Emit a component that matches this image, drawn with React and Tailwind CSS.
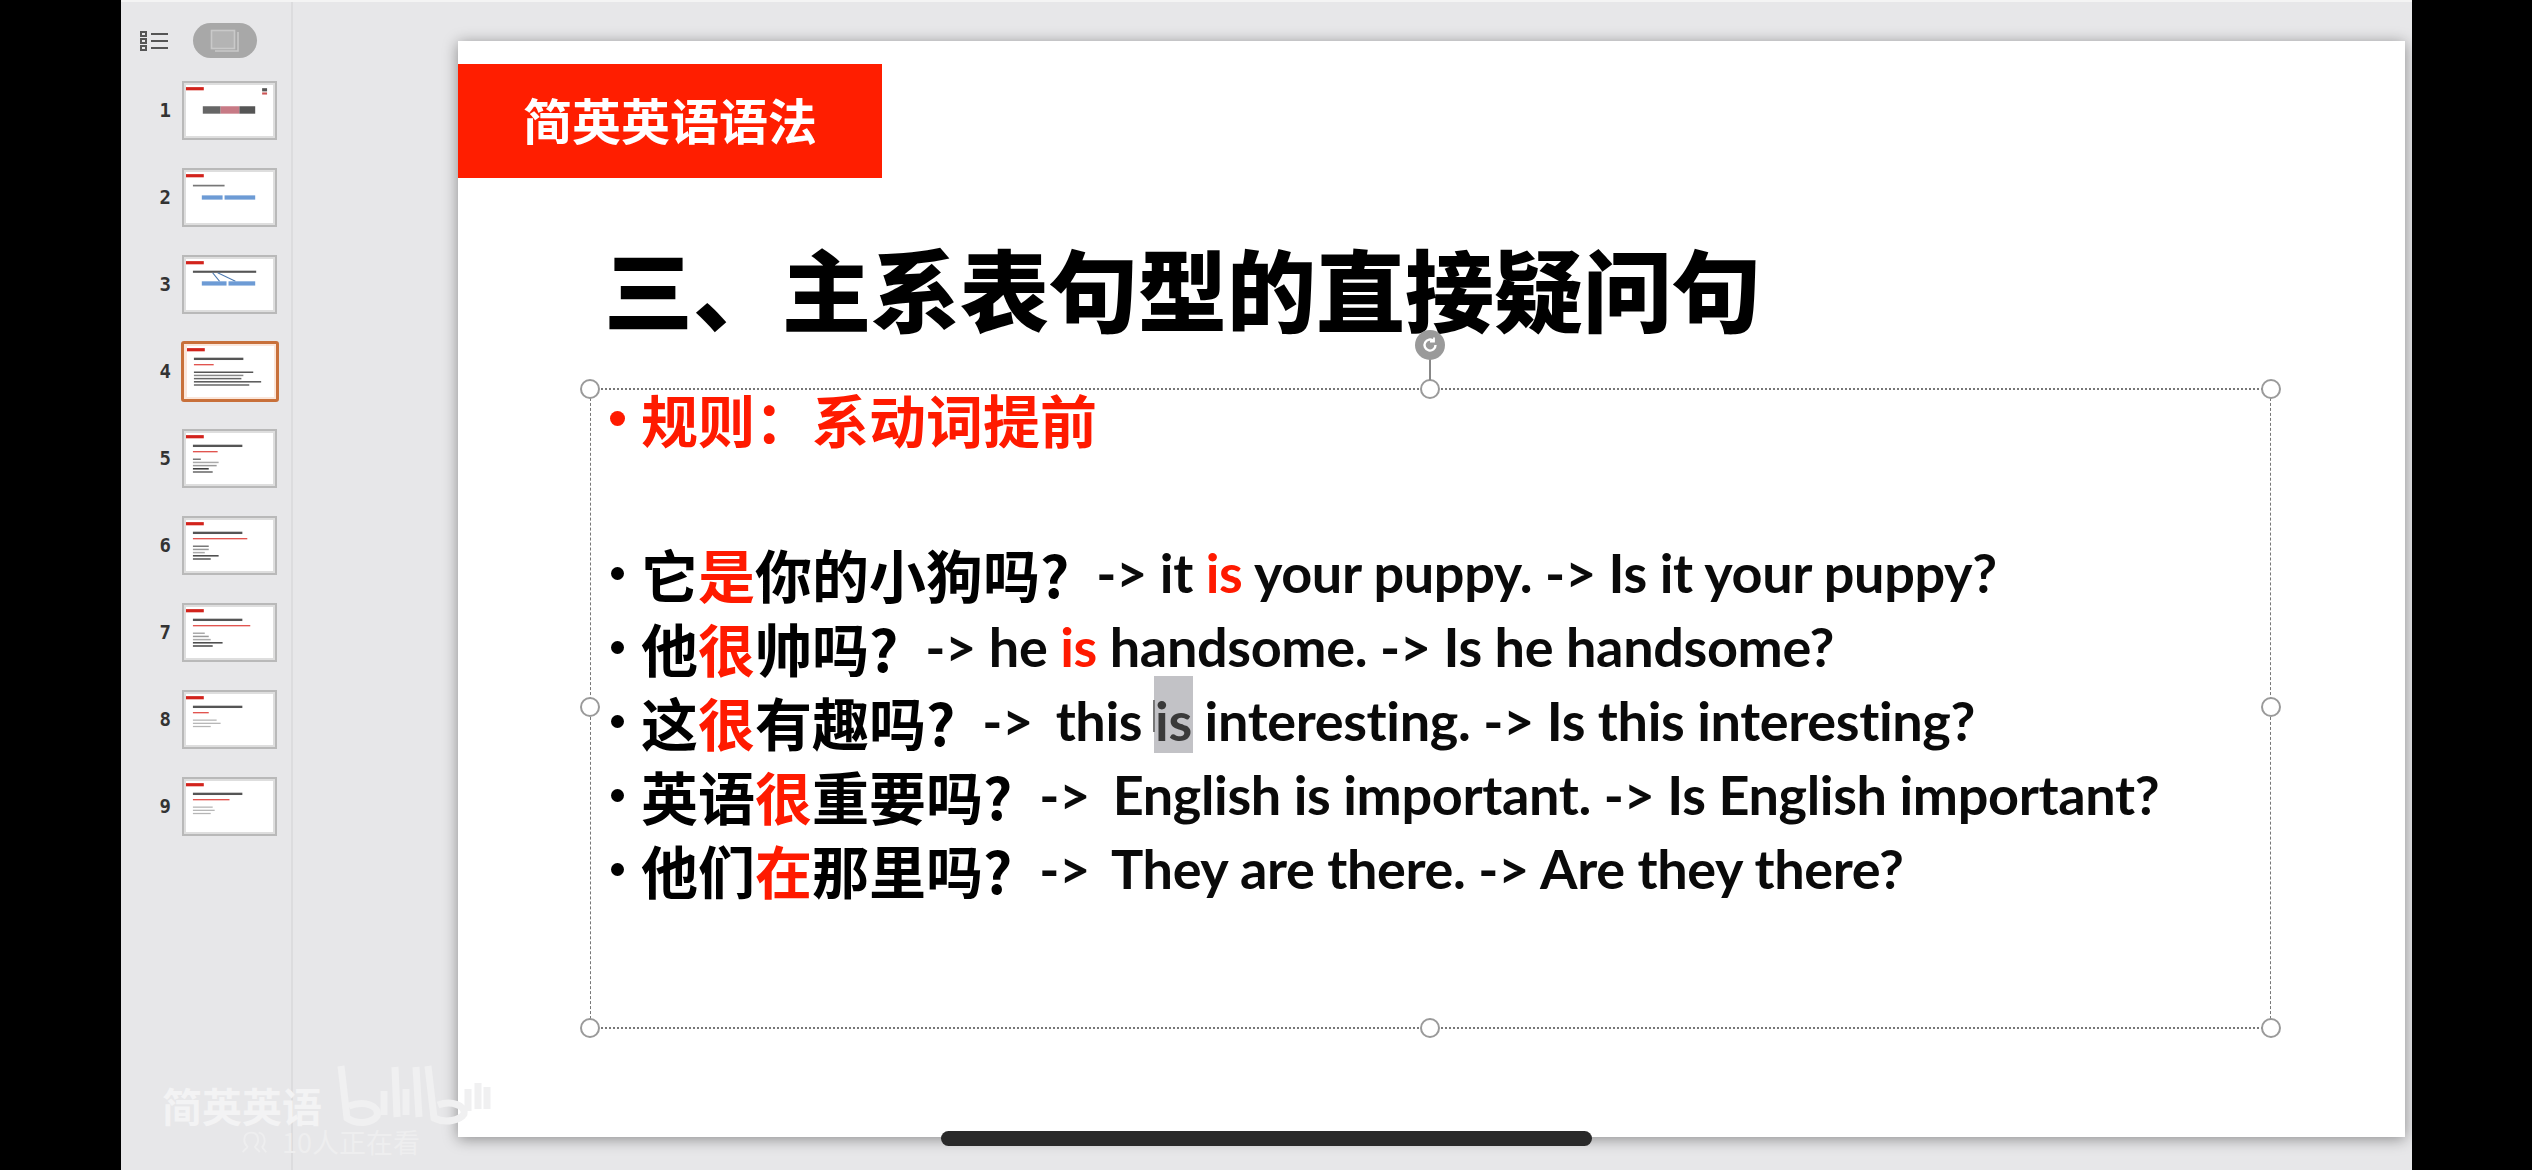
const CJK = "[font-family:'Noto_Sans_CJK_SC',sans-serif]";

const thumbs = [
  { n: 1, kind: "cover" },
  { n: 2, kind: "two" },
  { n: 3, kind: "three" },
  { n: 4, kind: "list", rows: [60, 50, 48, 68, 56], rule: 20, c: ["#555", "#888", "#666", "#555", "#666"] },
  { n: 5, kind: "list", rows: [8, 26, 24, 16, 20], rule: 25, c: ["#777", "#aaa", "#999", "#333", "#666"] },
  { n: 6, kind: "list", rows: [16, 16, 12, 26, 18], rule: 55, c: ["#777", "#999", "#aaa", "#444", "#555"] },
  { n: 7, kind: "list", rows: [12, 16, 18, 30, 20], rule: 58, c: ["#aaa", "#999", "#aaa", "#444", "#444"] },
  { n: 8, kind: "short", rule: 16, rows: [24, 28, 18] },
  { n: 9, kind: "short", rule: 37, rows: [20, 22, 18] },
];

function ThumbArt({ t }) {
  return (
    <svg viewBox="0 0 88 48" width="87" height="51" preserveAspectRatio="none" className="block blur-[0.6px]">
      <rect x="0" y="0" width="88" height="48" fill="#ffffff" />
      <rect x="0" y="2" width="18" height="3" fill="#d2231c" />
      {t.kind === "cover" && (
        <g>
          <rect x="77" y="3" width="5" height="3" fill="#555" />
          <rect x="77" y="7" width="5" height="2" fill="#c55" />
          <rect x="17" y="20" width="18" height="7" fill="#666" />
          <rect x="35" y="20" width="19" height="7" fill="#c77a85" />
          <rect x="54" y="20" width="16" height="7" fill="#555" />
        </g>
      )}
      {t.kind === "two" && (
        <g>
          <rect x="7" y="12" width="32" height="1.6" fill="#777" />
          <rect x="16" y="22" width="21" height="4" fill="#6d9bd5" />
          <rect x="39" y="22" width="31" height="4" fill="#6d9bd5" />
        </g>
      )}
      {t.kind === "three" && (
        <g>
          <rect x="7" y="11" width="64" height="2" fill="#555" />
          <line x1="27" y1="13" x2="34" y2="21" stroke="#4a78b0" strokeWidth="1" />
          <line x1="32" y1="13" x2="50" y2="21" stroke="#4a78b0" strokeWidth="1" />
          <rect x="16" y="21" width="25" height="4" fill="#6d9bd5" />
          <rect x="43" y="21" width="27" height="4" fill="#6d9bd5" />
        </g>
      )}
      {(t.kind === "list" || t.kind === "short") && (
        <g>
          <rect x="7" y="11" width="50" height="2.2" fill="#555" />
          <rect x="7" y="17" width={t.rule} height="1.2" fill="#e04a45" />
        </g>
      )}
      {t.kind === "list" &&
        t.rows.map((w, i) => <rect key={i} x="7" y={24 + i * 3} width={w} height="1.4" fill={t.c[i]} />)}
      {t.kind === "short" &&
        t.rows.map((w, i) => <rect key={i} x="7" y={24 + i * 3} width={w} height="1.2" fill="#b5b5b5" />)}
    </svg>
  );
}

function Thumb({ t }) {
  const active = t.n === 4;
  return (
    <div className="flex items-center h-[87px]">
      <div className="w-[61px] text-right pr-[11px] text-[19px] leading-none font-bold text-[#333] [font-family:'DejaVu_Sans_Mono',monospace]">
        {t.n}
      </div>
      <div
        className={
          active
            ? "w-[98px] h-[61px] -mx-[1px] box-border border-[3px] border-[#c8703a] bg-[#fbe6da] p-[1px] overflow-hidden rounded-[3px] flex items-center justify-center"
            : "w-[95px] h-[59px] box-border border-2 border-[#b9b9b9] bg-[#dedede] p-[2px] overflow-hidden"
        }
      >
        <ThumbArt t={t} />
      </div>
    </div>
  );
}

function Handle({ cls }) {
  return <span className={"absolute w-[20px] h-[20px] rounded-full bg-white border-2 border-[#9a9a9a] " + cls} />;
}

function Line({ children, en }) {
  return (
    <div className="flex items-center h-[74px] whitespace-pre">
      <span className="w-[13px] h-[13px] rounded-full bg-black ml-[-1px] mr-[17px] shrink-0" />
      <span className={CJK + " text-[57px] leading-none font-bold text-black"}>{children}</span>
      <span className="isolate ml-[27px] [font-family:Lato,sans-serif] text-[54px] leading-none font-bold text-[#0a0a0a] tracking-[-0.35px]">{en}</span>
    </div>
  );
}

const R = ({ children }) => <span className="text-[#ff1a00]">{children}</span>;
const Arrow = () => <span className="-mr-[3px]">-&gt; </span>;

export default function App() {
  return (
    <div className="relative w-[2532px] h-[1170px] overflow-hidden bg-black flex">
      <div className="w-[121px] shrink-0 bg-black" />
      <div className="w-[2291px] shrink-0 flex bg-[#e7e7e9] border-t-2 border-[#f4f4f4]">
        <aside className="w-[172px] shrink-0 border-r-2 border-[#dcdcde] pt-[21px]">
          <div className="flex items-center h-[35px] pl-[19px] gap-[24px]">
            <svg width="29" height="20" viewBox="0 0 29 20" fill="none" stroke="#555" strokeWidth="2">
              <rect x="1" y="1" width="5" height="4" />
              <rect x="1" y="8" width="5" height="4" />
              <rect x="1" y="15" width="5" height="4" />
              <path d="M11 3h17M11 10h17M11 17h17" />
            </svg>
            <div className="w-[64px] h-[35px] rounded-full bg-[#a8a8a8] flex items-center justify-center">
              <svg width="30" height="24" viewBox="0 0 30 24" fill="none" stroke="#c9c9c9" strokeWidth="1.6">
                <rect x="1.5" y="1.5" width="23" height="18" fill="#b4b4b4" />
                <path d="M28 3v19H5" />
              </svg>
            </div>
          </div>
          <div className="mt-[9px]">
            {thumbs.map((t) => (
              <Thumb key={t.n} t={t} />
            ))}
          </div>
        </aside>
        <main className="flex-1 pl-[165px] pt-[39px]">
          <section className="relative w-[1947px] h-[1096px] bg-white shadow-[0_2px_14px_rgba(0,0,0,0.4)] overflow-visible pt-[23px]">
            <div className={CJK + " w-[424px] h-[114px] bg-[#ff1e00] flex items-center justify-center pb-[6px] text-white text-[49px] leading-none font-bold"}>
              简英英语语法
            </div>
            <h1 className={CJK + " mt-[58px] ml-[146px] h-[100px] flex items-center text-[89px] leading-none font-black text-black whitespace-nowrap"}>
              三、主系表句型的直接疑问句
            </h1>
            <div className="relative mt-[52px] ml-[132px] w-[1681px] h-[641px] box-border border-y-2 border-x border-[#777] [border-top-style:dotted] [border-bottom-style:dotted] [border-left-style:dashed] [border-right-style:dashed] pl-[21px]">
              <div className={CJK + " flex items-center h-[56px] text-[57px] leading-none font-bold text-[#ff1a00]"}>
                <span className="w-[15px] h-[15px] rounded-full bg-[#ff1a00] -ml-[2px] mr-[16px]" />
                规则：系动词提前
              </div>
              <div className="mt-[90px]">
                <Line en={<>-&gt; it <R>is</R> your puppy. -&gt; Is it your puppy?</>}>
                  它<R>是</R>你的小狗吗?
                </Line>
                <Line en={<>-&gt; he <R>is</R> handsome. -&gt; Is he handsome?</>}>
                  他<R>很</R>帅吗?
                </Line>
                <Line
                  en={
                    <>
                      <Arrow /> this{" "}
                      <span className="relative text-[#3a3a3a]">
                        is
                        <span className="absolute -left-[1px] -right-[1px] -top-[12px] h-[77px] bg-[#c2c2c6] -z-10" />
                        <span className="absolute -left-[2px] top-[12px] w-[2px] h-[32px] bg-[#777]" />
                      </span>{" "}
                      interesting. -&gt; Is this interesting?
                    </>
                  }
                >
                  这<R>很</R>有趣吗?
                </Line>
                <Line en={<><Arrow /> English is important. -&gt; Is English important?</>}>
                  英语<R>很</R>重要吗?
                </Line>
                <Line en={<><Arrow /> They are there. -&gt; Are they there?</>}>
                  他们<R>在</R>那里吗?
                </Line>
              </div>
              <Handle cls="-left-[11px] -top-[11px]" />
              <Handle cls="left-[829px] -top-[11px]" />
              <Handle cls="-right-[11px] -top-[11px]" />
              <Handle cls="-left-[11px] top-[307px]" />
              <Handle cls="-right-[11px] top-[307px]" />
              <Handle cls="-left-[11px] -bottom-[11px]" />
              <Handle cls="left-[829px] -bottom-[11px]" />
              <Handle cls="-right-[11px] -bottom-[11px]" />
              <span className="absolute left-[838px] -top-[31px] w-[2px] h-[21px] bg-[#888]" />
              <span className="absolute left-[824px] -top-[60px] w-[30px] h-[30px] rounded-full bg-[#9a9a9a] flex items-center justify-center">
                <svg width="18" height="18" viewBox="0 0 18 18" fill="none" stroke="#fff" strokeWidth="2.4">
                  <path d="M14.5 9a5.5 5.5 0 1 1-1.8-4" />
                  <path d="M13 1.5v4h-4" strokeWidth="1.8" />
                </svg>
              </span>
            </div>
          </section>
        </main>
      </div>

      <div className="absolute left-[162px] top-[1063px] flex items-end pointer-events-none">
        <span className={CJK + " text-[40px] leading-[44px] mb-[6px] font-bold text-[#f3f3f4]"}>简英英语</span>
        <svg width="155" height="70" viewBox="0 0 155 70" fill="none" stroke="#f0f0f1" strokeWidth="7" className="ml-[14px]">
          <path d="M5 3l6 52c12 8 26 4 30-2 3-10-12-16-28-10" />
          <path d="M48 28v24M59 4l2 50M70 26v26M80 4l3 50" />
          <path d="M92 3l6 52c12 6 26 2 30-4 2-8-12-14-26-9" />
          <path d="M132 26v22M142 20v26M151 24v22" />
        </svg>
      </div>
      <div className="absolute left-[240px] top-[1128px] flex items-center gap-[14px] pointer-events-none">
        <svg width="28" height="24" viewBox="0 0 30 24" fill="none" stroke="#eeeeef" strokeWidth="2">
          <path d="M3 23c1-3 5-4 5-6-5-4-5-15 4-15s9 11 4 15c0 2 4 3 5 6" />
          <path d="M20 2c7 1 8 11 4 15 0 2 2 3 4 6" />
        </svg>
        <span className={CJK + " text-[27px] leading-none text-[#eeeeef]"}>10人正在看</span>
      </div>

      <div className="absolute left-[941px] top-[1131px] w-[651px] h-[15px] rounded-full bg-[#2a2a2a]" />
    </div>
  );
}
